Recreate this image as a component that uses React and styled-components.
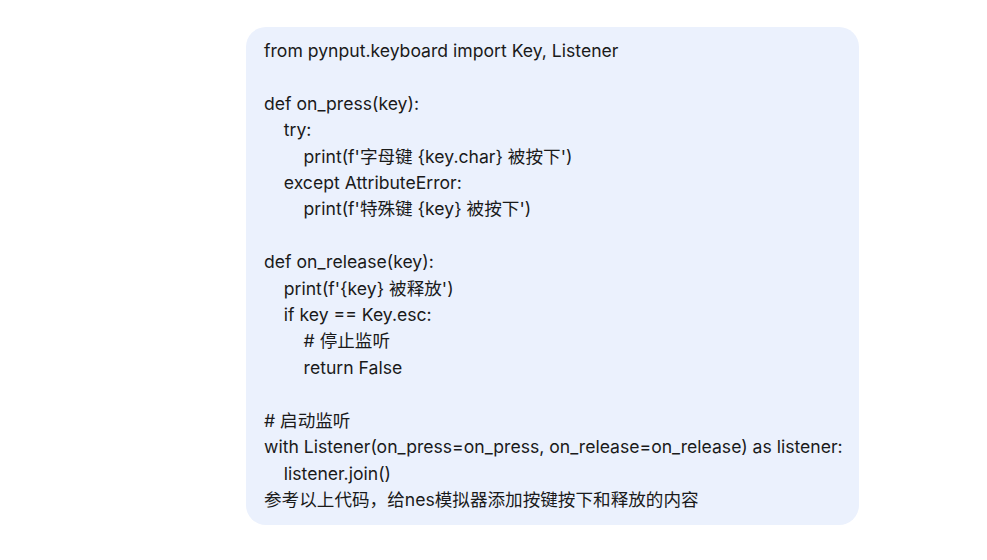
import React from 'react'
import styled, { createGlobalStyle } from 'styled-components'

const code = `from pynput.keyboard import Key, Listener

def on_press(key):
    try:
        print(f'字母键 {key.char} 被按下')
    except AttributeError:
        print(f'特殊键 {key} 被按下')

def on_release(key):
    print(f'{key} 被释放')
    if key == Key.esc:
        # 停止监听
        return False

# 启动监听
with Listener(on_press=on_press, on_release=on_release) as listener:
    listener.join()
参考以上代码，给nes模拟器添加按键按下和释放的内容`

const App = () => {
  return (
    <>
      <GlobalStyle />
      <Page>
        <Column>
          <Bubble>{code}</Bubble>
        </Column>
      </Page>
    </>
  )
}

const GlobalStyle = createGlobalStyle`
  body {
    margin: 0;
    background: #ffffff;
    font-family: Inter, "Noto Sans CJK SC", sans-serif;
  }
`;

const Page = styled.main`
  display: flex;
  justify-content: center;
  padding-top: 27px;
`;

const Column = styled.div`
  width: 731px;
  display: flex;
  flex-direction: column;
  align-items: flex-end;
`;

const Bubble = styled.div`
  box-sizing: border-box;
  width: 613px;
  padding: 11px 10px 12px 18px;
  background: #ebf1fd;
  border-radius: 20px;
  color: #1a1a1a;
  font-size: 17.6px;
  line-height: 26.4px;
  white-space: pre-wrap;
`;

export default App
